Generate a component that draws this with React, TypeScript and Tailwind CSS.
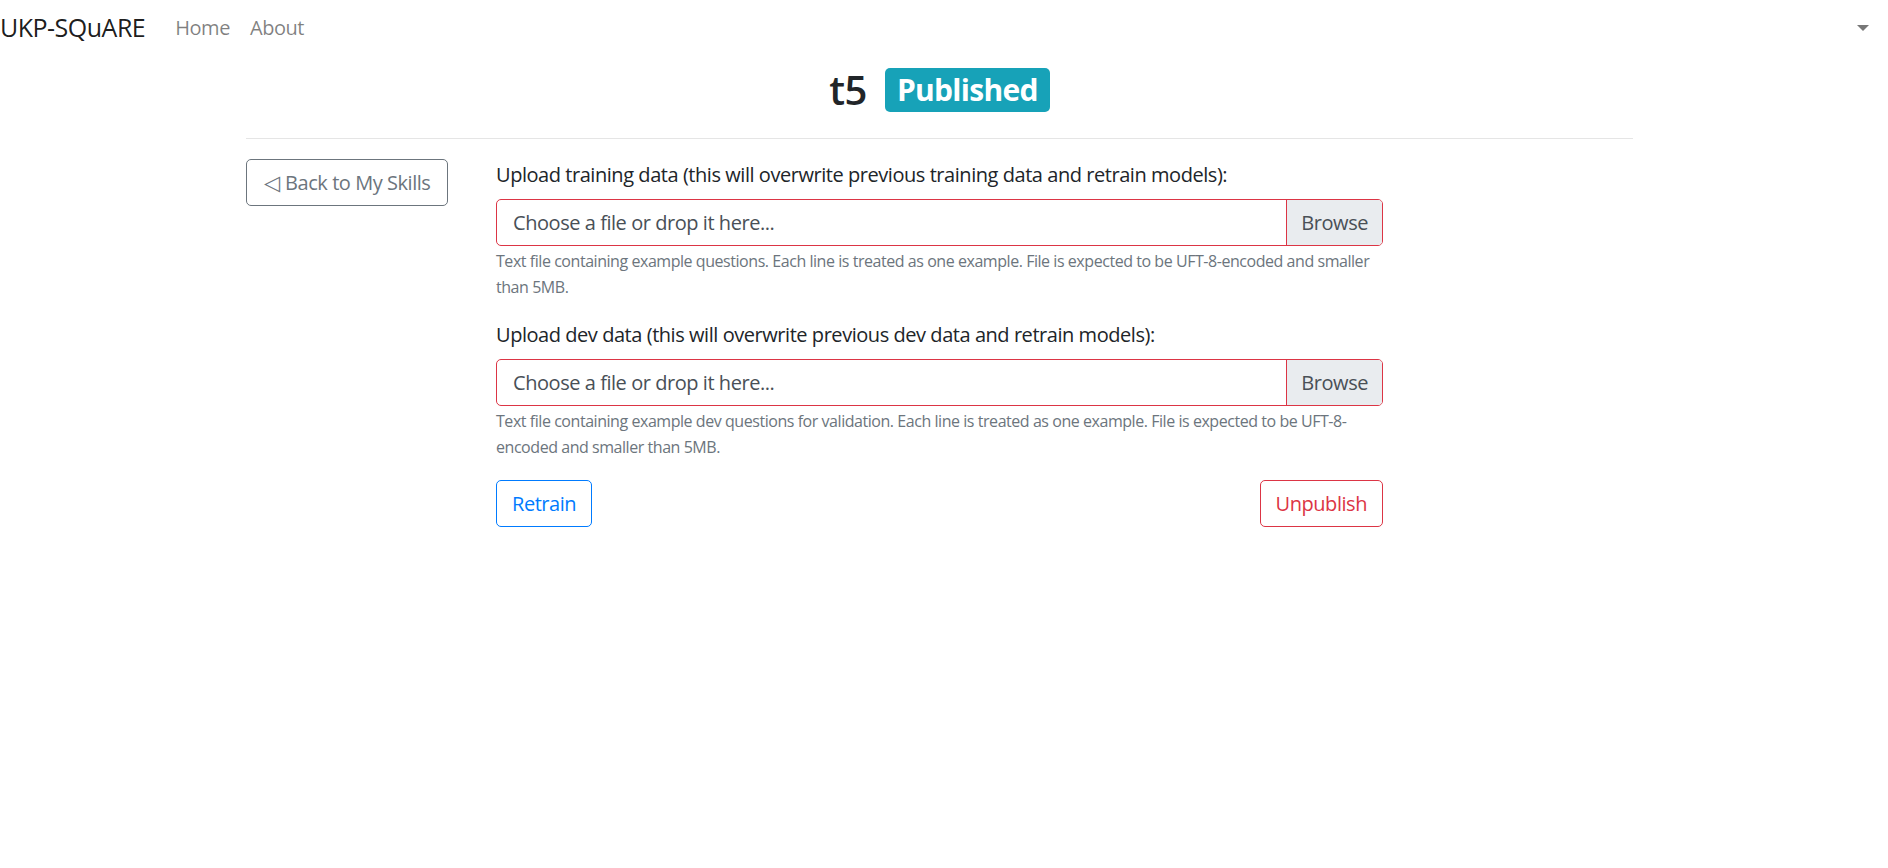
import React from "react";

const font = { fontFamily: '"Open Sans", "Noto Sans", sans-serif' };

const FileInput: React.FC = () => {
  return (
    <div className="flex h-[47px] w-full rounded-[5px] border border-[#dc3545] overflow-hidden">
      <div className="flex-1 flex items-center pl-[16px] text-[20px] tracking-[-0.45px] text-[#495057]">
        Choose a file or drop it here...
      </div>
      <div className="flex items-center px-[14px] bg-[#e9ecef] border-l border-[#dc3545] text-[20px] tracking-[-0.45px] text-[#495057]">
        Browse
      </div>
    </div>
  );
};

export default function App() {
  return (
    <div className="min-h-screen bg-white text-[#212529]" style={font}>
      {/* navbar */}
      <nav className="flex items-center h-[56px] pr-[19px]">
        <span className="text-[25px] tracking-[-0.5px] text-[rgba(0,0,0,0.9)] mr-[20px]">UKP-SQuARE</span>
        <a className="px-[10px] text-[20px] tracking-[-0.45px] text-[rgba(0,0,0,0.5)]">Home</a>
        <a className="px-[10px] text-[20px] tracking-[-0.45px] text-[rgba(0,0,0,0.5)]">About</a>
        <div className="ml-auto w-0 h-0 border-l-[6px] border-r-[6px] border-t-[6px] border-l-transparent border-r-transparent border-t-[#777]" />
      </nav>

      <div className="ml-[246px] w-[1387px]">
        {/* title */}
        <div className="mt-[12px] flex items-center justify-center gap-[18px] h-[44px]">
          <h2 className="text-[40px] font-semibold leading-none tracking-[-0.5px]">t5</h2>
          <span className="bg-[#17a2b8] text-white font-bold text-[30px] leading-none tracking-[-0.7px] px-[12px] py-[7px] rounded-[5px]">
            Published
          </span>
        </div>
        <hr className="mt-[26px] border-t border-[rgba(0,0,0,0.1)]" />

        <div className="flex mt-[20px]">
          <div className="w-[250px]">
            <button className="h-[47px] w-[202px] flex items-center justify-center gap-[6px] rounded-[5px] border border-[#6c757d] text-[#6c757d] text-[20px] tracking-[-0.45px]">
              <span className="text-[21px]">◁</span>
              <span>Back to My Skills</span>
            </button>
          </div>

          <div className="w-[887px]">
            <div className="mb-[20px]">
              <label className="block text-[20px] leading-[30px] tracking-[-0.45px] mt-[1px] mb-[9px]">
                Upload training data (this will overwrite previous training data and retrain models):
              </label>
              <FileInput />
              <p className="mt-[2px] text-[16px] leading-[26px] tracking-[-0.45px] text-[#6c757d]">
                Text file containing example questions. Each line is treated as one example. File is expected to be UFT-8-encoded and smaller than 5MB.
              </p>
            </div>

            <div>
              <label className="block text-[20px] leading-[30px] tracking-[-0.45px] mb-[9px]">
                Upload dev data (this will overwrite previous dev data and retrain models):
              </label>
              <FileInput />
              <p className="mt-[2px] text-[16px] leading-[26px] tracking-[-0.45px] text-[#6c757d]">
                Text file containing example dev questions for validation. Each line is treated as one example. File is expected to be UFT-8-encoded and smaller than 5MB.
              </p>
            </div>

            <div className="flex justify-between mt-[20px]">
              <button className="h-[47px] px-[15px] rounded-[5px] border border-[#007bff] text-[#007bff] text-[20px] tracking-[-0.45px]">
                Retrain
              </button>
              <button className="h-[47px] px-[15px] rounded-[5px] border border-[#dc3545] text-[#dc3545] text-[20px] tracking-[-0.45px]">
                Unpublish
              </button>
            </div>
          </div>
        </div>
      </div>
    </div>
  );
}
